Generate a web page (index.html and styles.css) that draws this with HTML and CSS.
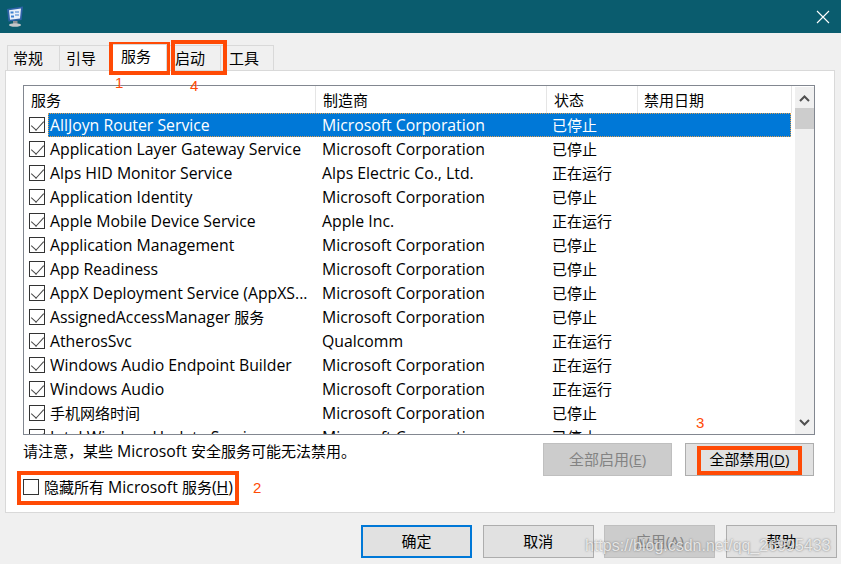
FILE: index.html
```html
<!DOCTYPE html>
<html lang="zh">
<head>
<meta charset="utf-8">
<title>系统配置</title>
<link rel="stylesheet" href="styles.css">
</head>
<body>
<div class="win">
  <header class="titlebar">
    <svg class="appicon" width="18" height="21" viewBox="0 0 18 21">
      <path d="M1 3 L17 0.5 L15.5 14 L2.5 15.5 Z" fill="#2f62a8"/>
      <path d="M3 4.3 L15 2.6 L14 12.6 L4 13.8 Z" fill="#e8eff9"/>
      <path d="M4.5 5.5 h3 v2 h-3z M9 5.5 h4 v1 h-4z M5 9.5 h3 v2 h-3z M9 8.5 h4 v1 h-4z" fill="#3a7fd0"/>
      <path d="M7 15 h4.500 v3 h-4.500z" fill="#8e9296"/>
      <ellipse cx="9" cy="19" rx="6" ry="1.800" fill="#c4c7ca"/>
    </svg>
    <svg class="closeicon" width="14" height="14" viewBox="0 0 14 14"><path d="M1 1 L13 13 M13 1 L1 13" stroke="#fff" stroke-width="1.1" fill="none"/></svg>
  </header>
  <main class="content">
    <nav class="tabs">
      <span class="tab w1">常规</span>
      <span class="tab w2">引导</span>
      <span class="tab active">服务</span>
      <span class="tab w4">启动</span>
      <span class="tab w5">工具</span>
    </nav>
    <section class="panel">
      <div class="list">
        <div class="listmain">
          <div class="row head">
            <span class="c1 h">服务</span><span class="c2 h">制造商</span><span class="c3 h">状态</span><span class="c4 h">禁用日期</span>
          </div>
          <div class="rows">
            <div class="row"><i class="cb on"></i><span class="sel"><span class="n">AllJoyn Router Service</span><span class="m">Microsoft Corporation</span><span class="s">已停止</span></span></div>
            <div class="row"><i class="cb on"></i><span class="n">Application Layer Gateway Service</span><span class="m">Microsoft Corporation</span><span class="s">已停止</span></div>
            <div class="row"><i class="cb on"></i><span class="n">Alps HID Monitor Service</span><span class="m">Alps Electric Co., Ltd.</span><span class="s">正在运行</span></div>
            <div class="row"><i class="cb on"></i><span class="n">Application Identity</span><span class="m">Microsoft Corporation</span><span class="s">已停止</span></div>
            <div class="row"><i class="cb on"></i><span class="n">Apple Mobile Device Service</span><span class="m">Apple Inc.</span><span class="s">正在运行</span></div>
            <div class="row"><i class="cb on"></i><span class="n">Application Management</span><span class="m">Microsoft Corporation</span><span class="s">已停止</span></div>
            <div class="row"><i class="cb on"></i><span class="n">App Readiness</span><span class="m">Microsoft Corporation</span><span class="s">已停止</span></div>
            <div class="row"><i class="cb on"></i><span class="n">AppX Deployment Service (AppXS...</span><span class="m">Microsoft Corporation</span><span class="s">已停止</span></div>
            <div class="row"><i class="cb on"></i><span class="n">AssignedAccessManager <span class="z">服务</span></span><span class="m">Microsoft Corporation</span><span class="s">已停止</span></div>
            <div class="row"><i class="cb on"></i><span class="n">AtherosSvc</span><span class="m">Qualcomm</span><span class="s">正在运行</span></div>
            <div class="row"><i class="cb on"></i><span class="n">Windows Audio Endpoint Builder</span><span class="m">Microsoft Corporation</span><span class="s">正在运行</span></div>
            <div class="row"><i class="cb on"></i><span class="n">Windows Audio</span><span class="m">Microsoft Corporation</span><span class="s">正在运行</span></div>
            <div class="row"><i class="cb on"></i><span class="n"><span class="z">手机网络时间</span></span><span class="m">Microsoft Corporation</span><span class="s">已停止</span></div>
            <div class="row"><i class="cb on"></i><span class="n">Intel Wireless Update Service</span><span class="m">Microsoft Corporation</span><span class="s">已停止</span></div>
          </div>
        </div>
        <div class="scroll">
          <svg class="arrow" width="11" height="7" viewBox="0 0 11 7"><path d="M1 6 L5.5 1.5 L10 6" stroke="#505050" stroke-width="2" fill="none"/></svg>
          <div class="thumb"></div>
          <svg class="arrow down" width="11" height="7" viewBox="0 0 11 7"><path d="M1 1 L5.5 5.5 L10 1" stroke="#505050" stroke-width="2" fill="none"/></svg>
        </div>
      </div>
      <div class="lower">
        <div class="lowerleft">
          <p class="note"><span class="z">请注意，某些</span> Microsoft <span class="z">安全服务可能无法禁用。</span></p>
          <label class="hide"><i class="cb"></i><span><span class="z">隐藏所有</span> Microsoft <span class="z">服务</span>(<u>H</u>)</span></label>
        </div>
        <div class="lowerright">
          <span class="btn dis"><span>全部启用(<u>E</u>)</span></span>
          <span class="btn"><span>全部禁用(<u>D</u>)</span></span>
        </div>
      </div>
    </section>
    <footer class="actions">
      <span class="btn big def">确定</span>
      <span class="btn big">取消</span>
      <span class="btn big dis">应用(A)</span>
      <span class="btn big">帮助</span>
    </footer>
  </main>
  <div class="mark m-tab1"></div>
  <div class="mark m-tab4"></div>
  <div class="mark m-hide"></div>
  <div class="mark m-dis"></div>
  <span class="num n1">1</span>
  <span class="num n2">2</span>
  <span class="num n3">3</span>
  <span class="num n4">4</span>
  <span class="wm">https://blog.csdn.net/qq_26995433</span>
</div>
</body>
</html>
```
FILE: styles.css
```css
* { box-sizing: border-box; }
html, body { margin: 0; padding: 0; }
body { width: 841px; height: 564px; overflow: hidden; background: #f0f0f0; }
.win {
  position: relative; width: 841px; height: 564px; background: #f0f0f0; color: #000;
  font-family: "Open Sans", "Noto Sans CJK SC", sans-serif; font-size: 15.8px; overflow: hidden;
}
.titlebar {
  height: 33px; background: #0a5c6e; display: flex; align-items: center;
  justify-content: space-between; padding: 0 11px 0 6px;
}
.z { font-size: 15px; }
.content { padding: 12px 6px 0 5px; }
.tabs { display: flex; height: 25px; padding-left: 2px; align-items: flex-end; }
.tab {
  height: 25px; border: 1px solid #d9d9d9; border-bottom: 0; border-left-width: 0;
  display: flex; align-items: center; padding: 0 0 2px 7px; font-size: 15px; background: #f0f0f0;
}
.w1 { width: 53px; border-left-width: 1px; padding-left: 5px; }
.w2 { width: 53px; padding-left: 6px; }
.active { width: 54px; height: 27px; background: #fff; position: relative; z-index: 1; margin-bottom: -1px; padding: 0 0 6px 8px; border-top-width: 1px; }
.w4 { width: 54px; padding-left: 8px; }
.w5 { width: 53px; padding-left: 8px; }
.panel {
  height: 443px; background: #fff; border: 1px solid #d9d9d9; padding: 14px 19px 0 17px;
}
.list { height: 350px; border: 1px solid #828790; display: flex; background: #fff; overflow: hidden; }
.listmain { width: 769px; flex: none; }
.row { height: 24px; display: flex; align-items: center; position: relative; white-space: nowrap; }
.head { height: 27px; }
.h { height: 27px; display: flex; align-items: center; padding: 0 0 1px 7px; border-right: 1px solid #e5e5e5; font-size: 15px; }
.c1 { width: 292px; }
.c2 { width: 231px; }
.c3 { width: 91px; }
.c4 { width: 154px; padding-left: 6px; }
.cb {
  display: block; width: 16px; height: 16px; border: 1px solid #333; background: #fff; flex: none; margin-left: 5px;
}
.cb.on { position: relative; }
.cb.on::after {
  content: ""; position: absolute; left: 4px; top: 0; width: 6px; height: 11px;
  border: solid #444; border-width: 0 1.6px 1.6px 0; transform: rotate(42deg);
}
.n { width: 274px; padding-left: 2px; flex: none; margin-left: 3px; }
.m { width: 230px; flex: none; }
.s { flex: none; font-size: 15px; padding-bottom: 2px; }
.sel {
  display: flex; align-items: center; width: 743px; height: 24px; margin-left: 3px;
  background: #0078d7; color: #fff; outline: 1px dotted #e0a050; outline-offset: -1px;
}
.sel .n { margin-left: 0; }
.scroll {
  flex: 1; background: #f0f0f0; margin-left: 2px; margin-top: 1px; display: flex; flex-direction: column; align-items: center; position: relative;
}
.arrow { margin-top: 8px; flex: none; }
.thumb { width: 100%; height: 21px; background: #cdcdcd; margin-top: 6px; }
.arrow.down { margin-top: auto; margin-bottom: 8px; }
.lower { display: flex; justify-content: space-between; padding-top: 8px; }
.lowerleft { display: flex; flex-direction: column; }
.note { margin: 0; line-height: 16px; }
.hide { display: flex; align-items: center; gap: 5px; margin-top: 17px; line-height: 22px; }
.hide .cb { margin-left: 0; border-color: #333; }
.lowerright { display: flex; gap: 13px; margin-right: 1px; }
.btn {
  display: flex; align-items: center; justify-content: center; width: 129px; height: 33px;
  background: #e1e1e1; border: 1px solid #adadad; font-size: 15px; padding-bottom: 2px;
}
.dis { background: #cccccc; border-color: #bfbfbf; color: #838383; }
.actions { display: flex; justify-content: flex-end; gap: 10.67px; padding-top: 12px; margin-right: -2px; }
.big { width: 111px; }
.def { border: 2px solid #0078d7; }
.mark { position: absolute; border: 4px solid #ff4a05; }
.m-tab1 { left: 109px; top: 42px; width: 61px; height: 33px; }
.m-tab4 { left: 171px; top: 40px; width: 56px; height: 35px; }
.m-hide { left: 17px; top: 471px; width: 222px; height: 34px; }
.m-dis { left: 697px; top: 446px; width: 105px; height: 29px; }
.num { position: absolute; color: #ff4a05; font-size: 15px; line-height: 18px; font-family: "Liberation Sans", sans-serif; }
.n1 { left: 115px; top: 74px; }
.n2 { left: 253px; top: 479px; }
.n3 { left: 696px; top: 414px; }
.n4 { left: 190px; top: 77px; }
.wm { position: absolute; left: 585px; top: 537px; color: rgba(255,255,255,.75); font: 16px "Liberation Sans", sans-serif; text-shadow: 0 0 2px rgba(90,90,90,.8); white-space: nowrap; }
```
